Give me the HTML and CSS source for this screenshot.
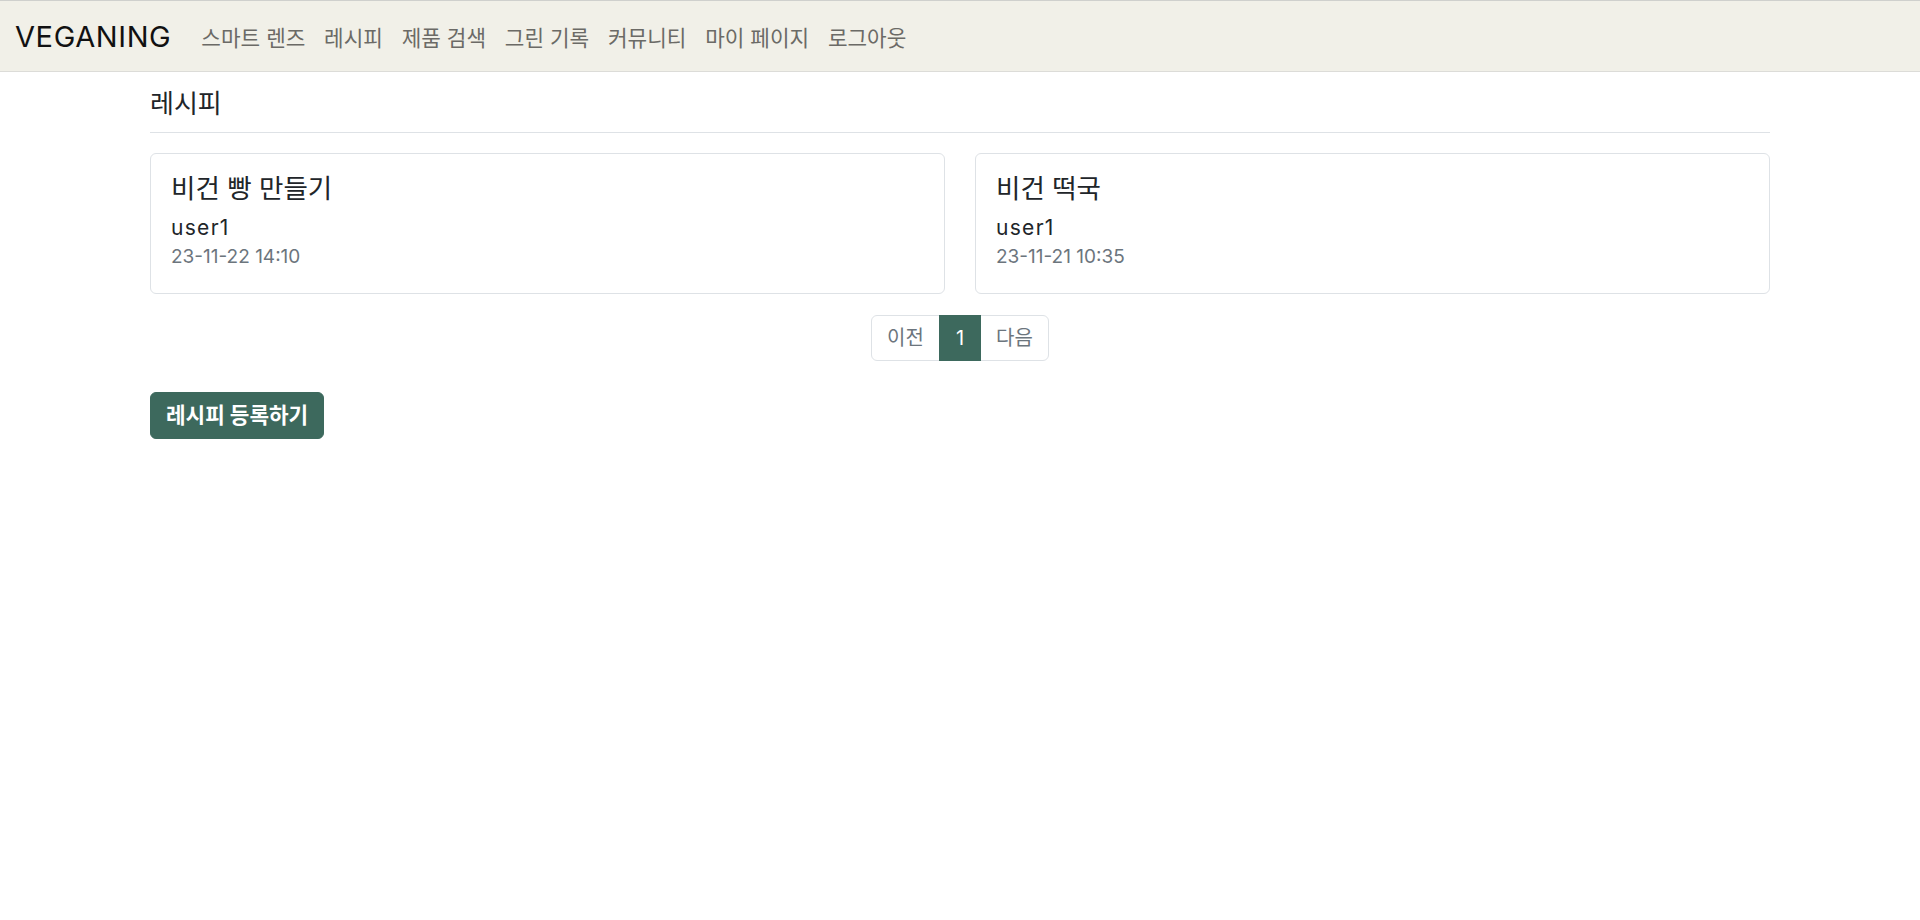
FILE: index.html
```html
<!DOCTYPE html>
<html lang="ko">
<head>
<meta charset="utf-8">
<title>VEGANING - 레시피</title>
<link rel="stylesheet" href="styles.css">
</head>
<body>
<nav class="navbar">
  <a class="brand" href="#">VEGANING</a>
  <ul class="nav">
    <li><a class="nav-link" href="#">스마트 렌즈</a></li>
    <li><a class="nav-link" href="#">레시피</a></li>
    <li><a class="nav-link" href="#">제품 검색</a></li>
    <li><a class="nav-link" href="#">그린 기록</a></li>
    <li><a class="nav-link" href="#">커뮤니티</a></li>
    <li><a class="nav-link" href="#">마이 페이지</a></li>
    <li><a class="nav-link" href="#">로그아웃</a></li>
  </ul>
</nav>
<main class="container">
  <h2 class="page-title">레시피</h2>
  <div class="card-grid">
    <div class="card">
      <h3 class="card-title">비건 빵 만들기</h3>
      <div class="card-user">user1</div>
      <div class="card-date">23-11-22 14:10</div>
    </div>
    <div class="card">
      <h3 class="card-title">비건 떡국</h3>
      <div class="card-user">user1</div>
      <div class="card-date">23-11-21 10:35</div>
    </div>
  </div>
  <div class="pager-wrap">
    <ul class="pager">
      <li><a class="page-link" href="#">이전</a></li>
      <li><a class="page-link active" href="#">1</a></li>
      <li><a class="page-link" href="#">다음</a></li>
    </ul>
  </div>
  <div class="actions">
    <a class="btn-primary" href="#">레시피 등록하기</a>
  </div>
</main>
</body>
</html>
```
FILE: styles.css
```css
* { box-sizing: border-box; }
html, body { margin: 0; padding: 0; }
body {
  font-family: "Inter", "Noto Sans CJK KR", sans-serif;
  color: #212529;
  background: #fff;
  font-size: 20px;
}
a { text-decoration: none; }
ul { list-style: none; margin: 0; padding: 0; }

.navbar {
  display: flex;
  align-items: center;
  height: 72px;
  padding: 0 15px;
  background: #f1f0e8;
  border-top: 1px solid #cfd0cd;
  border-bottom: 1px solid #dcdcd8;
}
.brand {
  font-size: 29px;
  font-weight: 400;
  color: #111;
  margin-right: 20px;
  letter-spacing: 0.6px;
}
.nav { display: flex; }
.nav-link {
  display: block;
  padding: 10px 9.4px;
  font-size: 21.3px;
  color: #6b6a66;
}
.nav li:first-child .nav-link { padding-left: 10px; }

.container {
  width: 1620px;
  margin: 0 auto;
  padding-top: 17px;
}
.page-title {
  margin: 0 0 20px;
  font-size: 26px;
  font-weight: 400;
  line-height: 29px;
  padding-bottom: 14px;
  border-bottom: 1px solid #dee2e6;
  color: #212529;
}
.card-grid {
  display: grid;
  grid-template-columns: 1fr 1fr;
  gap: 30px;
}
.card {
  border: 1px solid #dee2e6;
  border-radius: 6px;
  padding: 19px 20px 20px;
  height: 141px;
}
.card-title {
  margin: 0 0 13px;
  font-size: 26.5px;
  font-weight: 400;
  line-height: 30px;
}
.card-user {
  font-size: 21px;
  letter-spacing: 1.3px;
  line-height: 24px;
  margin-bottom: 5px;
}
.card-date {
  font-size: 19px;
  line-height: 24px;
  color: #6c757d;
}

.pager-wrap {
  display: flex;
  justify-content: center;
  margin-top: 21px;
}
.pager { display: flex; }
.page-link {
  display: block;
  height: 46px;
  line-height: 44px;
  padding: 0 15px;
  font-size: 20px;
  color: #6c757d;
  border: 1px solid #dee2e6;
  margin-left: -1px;
}
.pager li:first-child .page-link { border-radius: 6px 0 0 6px; margin-left: 0; }
.pager li:last-child .page-link { border-radius: 0 6px 6px 0; }
.page-link.active {
  background: #3d695d;
  border-color: #3d695d;
  color: #fff;
  position: relative;
  z-index: 1;
  padding: 0 16px;
}

.actions { margin-top: 31px; }
.btn-primary {
  display: inline-block;
  height: 47px;
  line-height: 45px;
  padding: 0 15px;
  font-size: 21.3px;
  font-weight: 700;
  color: #fff;
  background: #3d695d;
  border: 1px solid #3d695d;
  border-radius: 6px;
}
```
